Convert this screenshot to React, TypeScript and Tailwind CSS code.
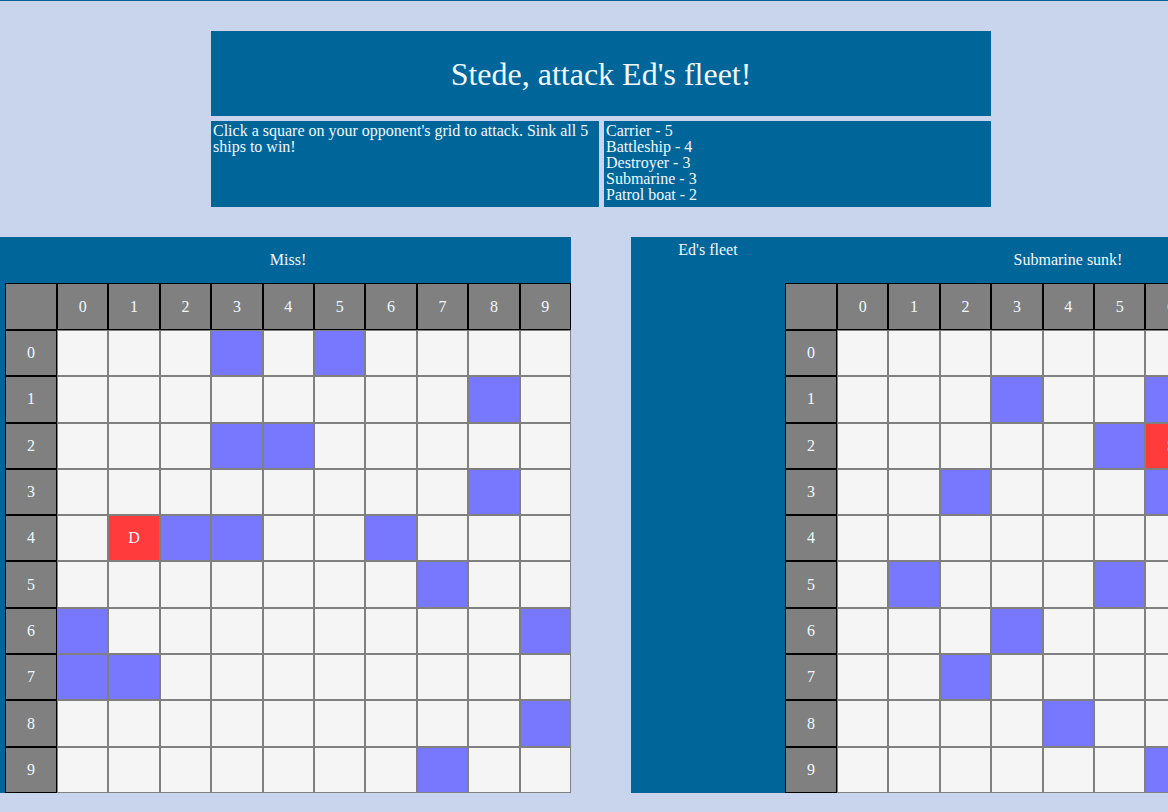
import React from "react";

const SIZE = 10;

type Mark = { ships: [number, number][]; hits: [number, number, string][] };

const myGrid: Mark = {
  ships: [
    [0, 3], [0, 5], [1, 8], [2, 3], [2, 4], [3, 8], [4, 2], [4, 3], [4, 6],
    [5, 7], [6, 0], [6, 9], [7, 0], [7, 1], [8, 9], [9, 7],
  ],
  hits: [[4, 1, "D"]],
};

const enemyGrid: Mark = {
  ships: [
    [1, 3], [1, 6], [2, 5], [3, 2], [3, 6], [5, 1], [5, 5], [6, 3], [7, 2],
    [8, 4], [9, 6],
  ],
  hits: [[2, 6, "S"]],
};

function Board({ caption, marks }: { caption: string; marks: Mark }) {
  const cellClass = (r: number, c: number) => {
    const hit = marks.hits.find((h) => h[0] === r && h[1] === c);
    if (hit) return { cls: "bg-[#ff3b3b]", text: hit[2] };
    if (marks.ships.some((s) => s[0] === r && s[1] === c)) return { cls: "bg-[#7878ff]", text: "" };
    return { cls: "bg-[#f5f5f5]", text: "" };
  };

  return (
    <div className="w-[566px] shrink-0">
      <div className="h-[46px] flex items-center justify-center">{caption}</div>
      <div className="grid grid-cols-[52px_repeat(10,minmax(0,1fr))] grid-rows-[47px_repeat(10,minmax(0,1fr))] h-[510px]">
        <div className="bg-[#808080] border border-black" />
        {Array.from({ length: SIZE }, (_, c) => (
          <div key={"h" + c} className="bg-[#808080] border border-black flex items-center justify-center">
            {c}
          </div>
        ))}
        {Array.from({ length: SIZE }, (_, r) => (
          <React.Fragment key={r}>
            <div className="bg-[#808080] border border-black flex items-center justify-center">{r}</div>
            {Array.from({ length: SIZE }, (_, c) => {
              const cell = cellClass(r, c);
              return (
                <div key={c} className={`${cell.cls} border border-[#808080] flex items-center justify-center`}>
                  {cell.text}
                </div>
              );
            })}
          </React.Fragment>
        ))}
      </div>
    </div>
  );
}

export default function App() {
  return (
    <div className="w-[1168px] h-[812px] overflow-hidden bg-[#c9d5ec] border-t border-[#006699] text-[#f0f8ff] text-[16px] font-['Liberation_Serif',serif]">
      <div className="w-[780px] ml-[211px] mt-[30px]">
        <div className="h-[85px] bg-[#006699] flex items-center justify-center text-[32px]">
          Stede, attack Ed's fleet!
        </div>
        <div className="grid grid-cols-[388px_387px] gap-[5px] mt-[5px] h-[86px] leading-4">
          <div className="bg-[#006699] px-[2px] pt-[2px]">
            Click a square on your opponent's grid to attack. Sink all 5 ships to win!
          </div>
          <div className="bg-[#006699] px-[2px] pt-[2px]">
            <div>Carrier - 5</div>
            <div>Battleship - 4</div>
            <div>Destroyer - 3</div>
            <div>Submarine - 3</div>
            <div>Patrol boat - 2</div>
          </div>
        </div>
      </div>

      <div className="flex gap-[60px] mt-[30px] items-start">
        <div className="bg-[#006699] pl-[5px] shrink-0 flex">
          <Board caption="Miss!" marks={myGrid} />
        </div>
        <div className="bg-[#006699] shrink-0 flex">
          <div className="w-[154px] text-center pt-[1px]">Ed's fleet</div>
          <Board caption="Submarine sunk!" marks={enemyGrid} />
        </div>
      </div>
    </div>
  );
}
